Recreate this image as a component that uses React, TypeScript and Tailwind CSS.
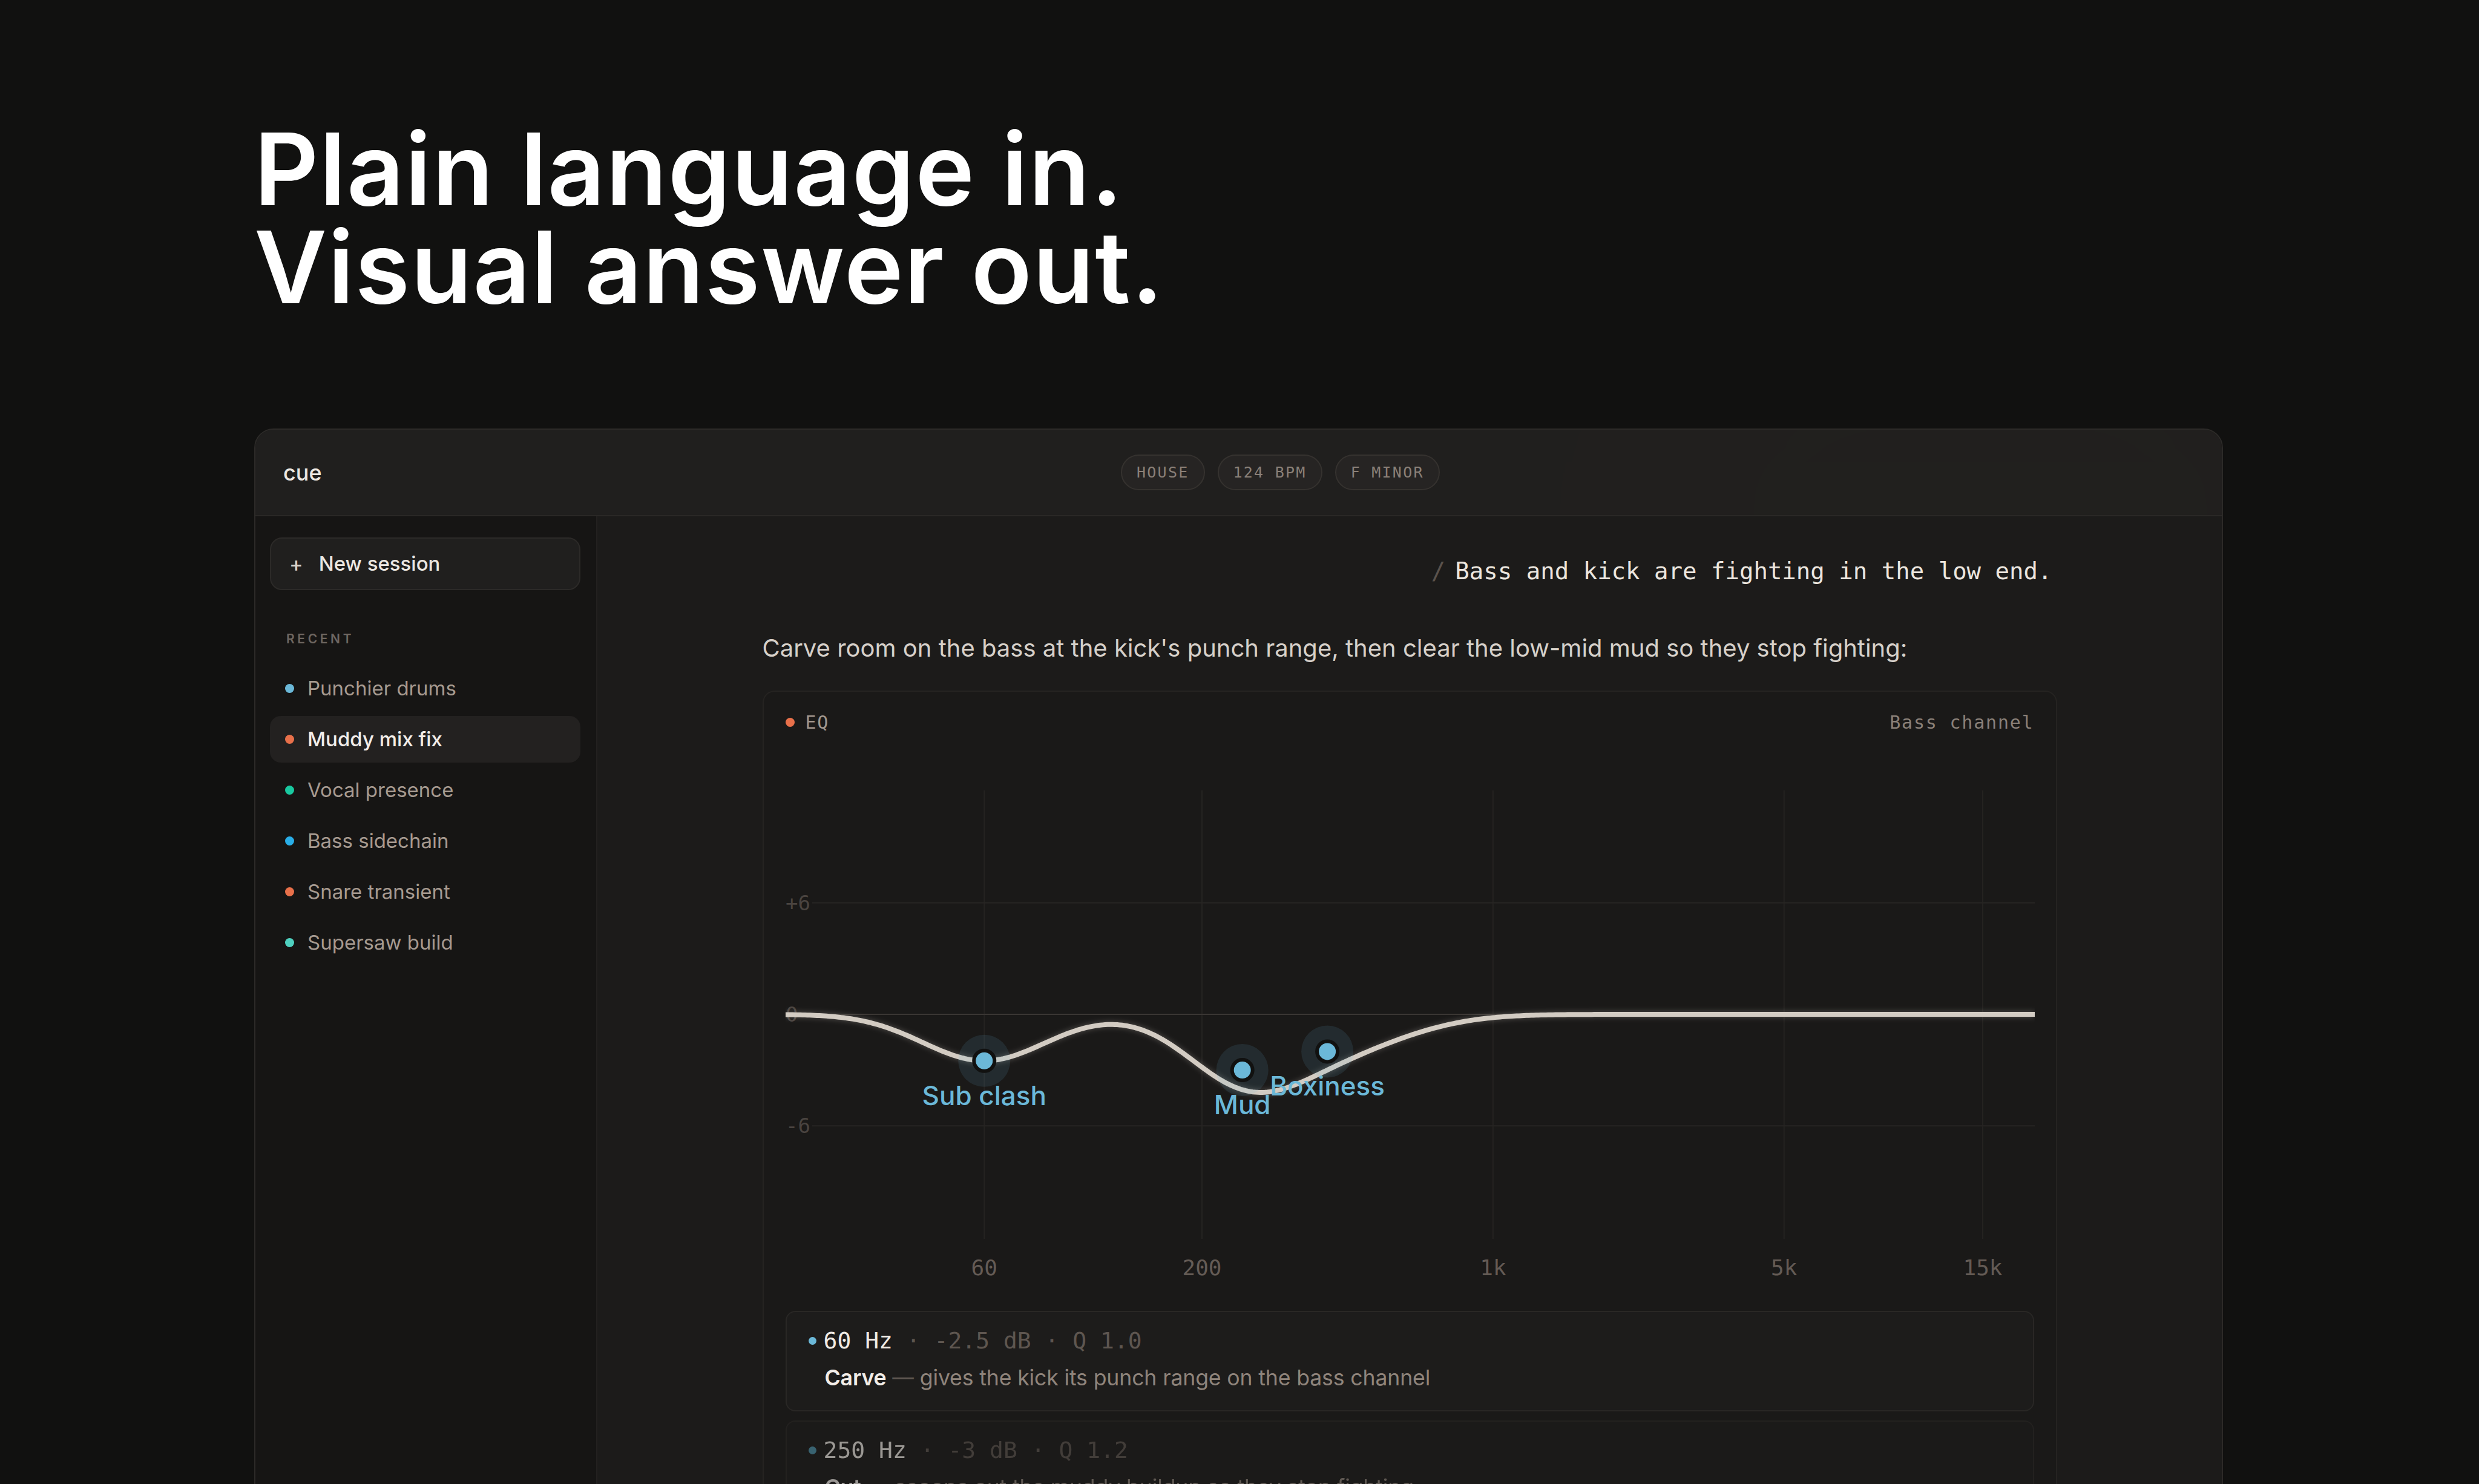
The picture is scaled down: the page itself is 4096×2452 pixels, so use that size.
const MONO = "font-['DejaVu_Sans_Mono',monospace]";

const sessions = [
  { name: 'Punchier drums', dot: 'bg-[#6bb8d8]' },
  { name: 'Muddy mix fix', dot: 'bg-[#e8704a]', active: true },
  { name: 'Vocal presence', dot: 'bg-[#19c9a0]' },
  { name: 'Bass sidechain', dot: 'bg-[#29aee8]' },
  { name: 'Snare transient', dot: 'bg-[#e8704a]' },
  { name: 'Supersaw build', dot: 'bg-[#4fd1c0]' },
];

const tags = ['HOUSE', '124 BPM', 'F MINOR'];

// bells are gaussian in octaves, width w in octaves
const bands = [
  { f: 60, g: -2.5, w: 0.49, label: 'Sub clash' },
  { f: 250, g: -3, w: 0.457, label: 'Mud' },
  { f: 400, g: -2, w: 0.6, label: 'Boxiness' },
];

const moves = [
  {
    hz: '60 Hz',
    rest: ' · -2.5 dB · Q 1.0',
    verb: 'Carve',
    text: 'gives the kick its punch range on the bass channel',
    dot: 'bg-[#6bb8d8]',
    dim: false,
  },
  {
    hz: '250 Hz',
    rest: ' · -3 dB · Q 1.2',
    verb: 'Cut',
    text: 'scoops out the muddy buildup so they stop fighting',
    dot: 'bg-[#4f95ad]',
    dim: true,
  },
];

const W = 2064;
const H = 880;
const DECADE = 688;
const ZERO = 437;
const PER_DB = 30.7;

const fx = (f: number) => DECADE * Math.log10(f / 20);
const dy = (db: number) => ZERO - db * PER_DB;

function gainAt(f: number) {
  return bands.reduce((sum, b) => {
    const d = Math.log2(f / b.f);
    return sum + b.g * Math.exp(-(d * d) / (2 * b.w * b.w));
  }, 0);
}

function curvePath() {
  const pts: string[] = [];
  for (let x = 0; x <= W; x += 4) {
    const f = 20 * Math.pow(10, x / DECADE);
    pts.push(`${x === 0 ? 'M' : 'L'}${x},${dy(gainAt(f)).toFixed(2)}`);
  }
  return pts.join(' ');
}

function EqChart() {
  const ticks = [
    { f: 60, t: '60' },
    { f: 200, t: '200' },
    { f: 1000, t: '1k' },
    { f: 5000, t: '5k' },
    { f: 15000, t: '15k' },
  ];
  const d = curvePath();
  return (
    <svg width={W} height={H} viewBox={`0 0 ${W} ${H}`} className="block">
      <defs>
        <filter id="glow" x="-5%" y="-50%" width="110%" height="200%">
          <feGaussianBlur stdDeviation="4" />
        </filter>
      </defs>
      {ticks.map((t) => (
        <line key={t.t} x1={fx(t.f)} x2={fx(t.f)} y1={67} y2={808} stroke="#252321" strokeWidth={2} />
      ))}
      <line x1={44} x2={W} y1={dy(6)} y2={dy(6)} stroke="#272523" strokeWidth={2} />
      <line x1={44} x2={W} y1={dy(-6)} y2={dy(-6)} stroke="#272523" strokeWidth={2} />
      <line x1={0} x2={W} y1={ZERO} y2={ZERO} stroke="#3a3633" strokeWidth={2} />
      <g fontFamily="DejaVu Sans Mono, monospace" fontSize={34} fill="#4a4440">
        <text x={0} y={dy(6)} dominantBaseline="central">+6</text>
        <text x={0} y={ZERO} dominantBaseline="central">0</text>
        <text x={0} y={dy(-6)} dominantBaseline="central">-6</text>
      </g>
      <path d={d} fill="none" stroke="#d6cfc6" strokeWidth={10} strokeOpacity={0.25} filter="url(#glow)" />
      <path d={d} fill="none" stroke="#d3ccc3" strokeWidth={8} strokeLinecap="round" />
      {bands.map((b) => (
        <g key={b.label}>
          <circle cx={fx(b.f)} cy={dy(b.g)} r={43} fill="#6bb8d8" fillOpacity={0.12} />
          <circle cx={fx(b.f)} cy={dy(b.g)} r={17} fill="#6bb8d8" stroke="#111110" strokeWidth={6} />
        </g>
      ))}
      <g fontFamily="Inter, sans-serif" fontSize={44} fontWeight={500} fill="#6bb8d8" textAnchor="middle">
        {bands.map((b) => (
          <text key={b.label} x={fx(b.f)} y={dy(b.g) + 57} dominantBaseline="central">
            {b.label}
          </text>
        ))}
      </g>
      <g fontFamily="DejaVu Sans Mono, monospace" fontSize={36} fill="#645b55" textAnchor="middle">
        {ticks.map((t) => (
          <text key={t.t} x={fx(t.f)} y={855} dominantBaseline="central">
            {t.t}
          </text>
        ))}
      </g>
    </svg>
  );
}

function Sidebar() {
  return (
    <aside className="w-[565px] shrink-0 bg-[#161514] border-r-2 border-[#232120] px-[24px] pt-[35px]">
      <button className="flex items-center w-[513px] h-[87px] rounded-[20px] border-2 border-[#2c2a28] bg-[#201f1e] pl-[30px] text-[33px] text-[#ece7e1] font-medium">
        <span className="text-[34px] text-[#d8d2cb] mr-[26px]">+</span>
        New session
      </button>
      <div className="mt-[66px] pl-[27px] text-[21px] font-semibold tracking-[0.22em] text-[#6e6660] leading-[30px]">RECENT</div>
      <ul className="mt-[28px] flex flex-col gap-[7px]">
        {sessions.map((s) => (
          <li
            key={s.name}
            className={`flex items-center h-[77px] w-[513px] rounded-[18px] pl-[25px] text-[33px] ${
              s.active ? 'bg-[#232120] text-[#f2ede8] font-medium' : 'text-[#a69a90]'
            }`}
          >
            <span className={`w-[15px] h-[15px] rounded-full ${s.dot} mr-[22px]`} />
            {s.name}
          </li>
        ))}
      </ul>
    </aside>
  );
}

function MoveCard({ m }: { m: (typeof moves)[number] }) {
  return (
    <div
      className={`rounded-[16px] border-2 border-[#292725] bg-[#1d1c1b] pl-[36px] pt-[24px] pb-[30px] ${
        m.dim ? 'opacity-60' : ''
      }`}
    >
      <div className={`flex items-center ${MONO} text-[38px] leading-[46px]`}>
        <span className={`w-[13px] h-[13px] rounded-full ${m.dot} mr-[12px]`} />
        <span className="text-[#f0ebe5] whitespace-pre">{m.hz}</span>
        <span className="text-[#5e5650] whitespace-pre">{m.rest}</span>
      </div>
      <div className="mt-[14px] pl-[27px] text-[35.7px] leading-[48px] tracking-[-0.005em]">
        <span className="text-[#f2ede8] font-semibold">{m.verb}</span>
        <span className="text-[#5e5650]"> — </span>
        <span className="text-[#8f847b]">{m.text}</span>
      </div>
    </div>
  );
}

function Conversation() {
  return (
    <main className="flex-1 bg-[#1c1b1a]">
      <div className="mx-auto w-[2139px] pt-[62px]">
        <div className={`flex justify-end pr-[8px] ${MONO} text-[39px] leading-[57px]`}>
          <span className="text-[#5a524c] mr-[16px]">/</span>
          <span className="text-[#ece6df]">Bass and kick are fighting in the low end.</span>
        </div>
        <p className="mt-[69px] text-[40px] leading-[60px] text-[#d6d0c9]">
          Carve room on the bass at the kick's punch range, then clear the low-mid mud so they stop fighting:
        </p>
        <section className="mt-[40px] rounded-[20px] border-2 border-[#252321] bg-[#1a1918] px-[36px] pt-[30px]">
          <div className={`flex items-center justify-between h-[40px] ${MONO} text-[30px] tracking-[0.06em]`}>
            <div className="flex items-center">
              <span className="w-[15px] h-[15px] rounded-full bg-[#e8704a] mr-[18px]" />
              <span className="text-[#a0958c]">EQ</span>
            </div>
            <span className="text-[#8a8078]">Bass channel</span>
          </div>
          <div className="mt-[26px]">
            <EqChart />
          </div>
          <div className="mt-[47px] flex flex-col gap-[15px]">
            {moves.map((m) => (
              <MoveCard key={m.hz} m={m} />
            ))}
          </div>
        </section>
      </div>
    </main>
  );
}

export default function App() {
  return (
    <div className="h-[2452px] overflow-hidden bg-[#111110] font-['Inter',sans-serif] pl-[420px] pr-[423px]">
      <h1 className="pt-[198px] text-[165px] leading-[162px] font-semibold tracking-[0.01em] text-white">
        Plain language in.
        <br />
        Visual answer out.
      </h1>
      <div className="relative mt-[186px] rounded-t-[32px] border-2 border-[#2c2a28] overflow-hidden">
        {/* warm haze behind the window content */}
        <div className="pointer-events-none absolute left-[2200px] top-[-300px] w-[1300px] h-[900px] rounded-full bg-[#5a2a20] opacity-[0.12] blur-[160px]" />
        <div className="pointer-events-none absolute left-[400px] top-[500px] w-[700px] h-[1200px] rounded-full bg-[#5a2a20] opacity-[0.09] blur-[160px]" />
        <header className="relative flex items-center h-[143px] border-b-2 border-[#2a2826] bg-[#222120]/90 pl-[46px]">
          <span className="text-[36px] font-medium text-[#ece7e1] w-[1384px]">cue</span>
          <div className="flex gap-[21px]">
            {tags.map((t) => (
              <span
                key={t}
                className={`flex items-center h-[59px] px-[24px] rounded-full border-2 border-[#35322f] bg-[#262423] ${MONO} text-[25px] tracking-[0.09em] text-[#8a8078]`}
              >
                {t}
              </span>
            ))}
          </div>
        </header>
        <div className="relative flex h-[1700px]">
          <Sidebar />
          <Conversation />
        </div>
      </div>
    </div>
  );
}
